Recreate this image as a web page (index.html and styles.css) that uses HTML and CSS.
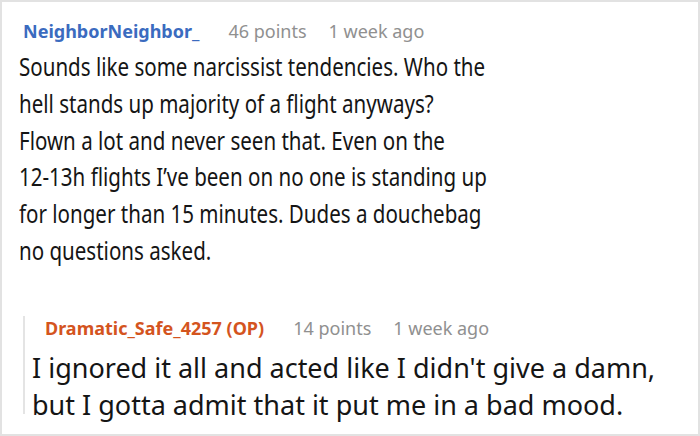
FILE: index.html
```html
<!DOCTYPE html>
<html>
<head>
<meta charset="utf-8">
<link rel="stylesheet" href="styles.css">
</head>
<body>
<div class="frame">
  <div class="comment">
    <div class="meta">
      <span class="author">NeighborNeighbor_</span>
      <span class="info points">46 points</span>
      <span class="info">1 week ago</span>
    </div>
    <p class="text">Sounds like some narcissist tendencies. Who the<br>hell stands up majority of a flight anyways?<br>Flown a lot and never seen that. Even on the<br>12-13h flights I’ve been on no one is standing up<br>for longer than 15 minutes. Dudes a douchebag<br>no questions asked.</p>
    <div class="reply">
      <div class="meta">
        <span class="author op">Dramatic_Safe_4257 (OP)</span>
        <span class="info points">14 points</span>
        <span class="info">1 week ago</span>
      </div>
      <p class="text">I ignored it all and acted like I didn't give a damn,<br>but I gotta admit that it put me in a bad mood.</p>
    </div>
  </div>
</div>
</body>
</html>
```
FILE: styles.css
```css
html, body {
  margin: 0;
  padding: 0;
  background: #fff;
}
.frame {
  width: 700px;
  height: 436px;
  box-sizing: border-box;
  border: 2px solid #e2e2e2;
  overflow: hidden;
  font-family: "Noto Sans", sans-serif;
}
.comment {
  padding: 17px 0 0 21px;
}
.meta {
  display: flex;
  gap: 22px;
  font-size: 18px;
  line-height: 24px;
}
.author {
  font-weight: bold;
  color: #3b6bbf;
  margin-right: 7px;
}
.author.op {
  color: #d4541e;
}
.info {
  color: #909090;
}
.text {
  margin: 5px 0 0 -4px;
  font-size: 26px;
  line-height: 36.8px;
  color: #151515;
  white-space: nowrap;
  transform: scaleX(0.79);
  transform-origin: left top;
}
.reply {
  margin: 60px 0 0 0;
  border-left: 2px solid #e4e4e4;
  padding: 0 0 0 20px;
  height: 98px;
}
.reply .meta {
  margin-top: -13px;
}
.reply .text {
  margin-top: 10px;
  margin-left: -13px;
  font-size: 27px;
  transform: none;
}
```
